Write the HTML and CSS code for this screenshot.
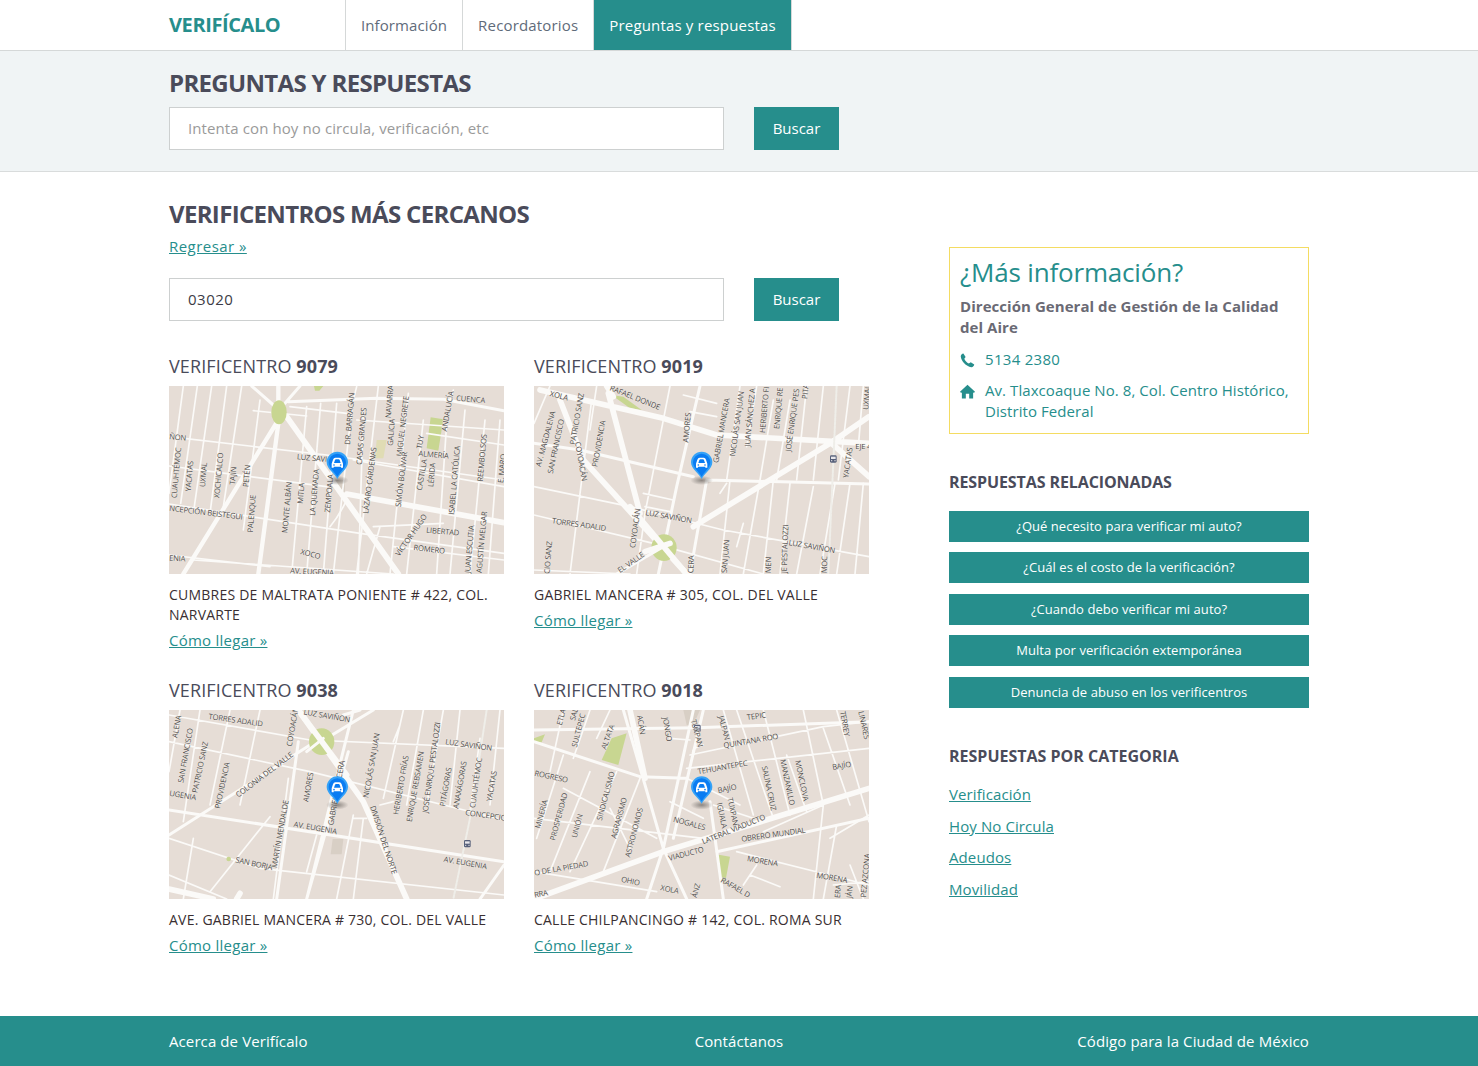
FILE: index.html
```html
<!DOCTYPE html>
<html lang="es">
<head>
    <meta charset="UTF-8">
    <title>Verifícalo</title>
    <link rel="stylesheet" href="styles.css">
</head>
<body>

    <!-- Shared pin and bus stop -->
    <svg class="defs" width="0" height="0">
        <defs>
            <radialGradient id="pinShadow">
                <stop offset="0" stop-color="#6f6a66" stop-opacity=".75"/>
                <stop offset="1" stop-color="#6f6a66" stop-opacity="0"/>
            </radialGradient>
            <g id="pin">
                <ellipse cx="0" cy="4" rx="34" ry="14" fill="url(#pinShadow)"/>
                <path d="M0 0C-6 -14 -32 -30 -32 -50A32 32 0 1 1 32 -50C32 -30 6 -14 0 0Z" fill="#35a2f7"/>
                <path d="M0 -7C-6 -18 -26 -34 -26 -50A26 26 0 1 1 26 -50C26 -34 6 -18 0 -7Z" fill="#0a7cf2"/>
                <path d="M-17 -46L-13 -58Q-11 -64 -6 -64H6Q11 -64 13 -58L17 -46V-34H11V-37H-11V-34H-17ZM-10 -48H10L7 -57Q6 -59 4 -59H-4Q-6 -59 -7 -57Z" fill="#fff" fill-rule="evenodd"/>
                <circle cx="-10" cy="-42" r="2.500" fill="#0a7cf2"/>
                <circle cx="10" cy="-42" r="2.500" fill="#0a7cf2"/>
            </g>
            <g id="bus">
                <rect x="-10" y="-11" width="20" height="22" rx="4" fill="#57607a"/>
                <rect x="-7" y="-7" width="14" height="7" fill="#e8e6ea"/>
                <circle cx="-5" cy="5" r="2" fill="#e8e6ea"/>
                <circle cx="5" cy="5" r="2" fill="#e8e6ea"/>
            </g>
        </defs>
    </svg>

    <!-- Nav -->
    <header class="topbar">
        <div class="wrap topbar-in">
            <a class="brand">VERIFÍCALO</a>
            <nav class="tabs">
                <a class="tab">Información</a>
                <a class="tab">Recordatorios</a>
                <a class="tab active">Preguntas y respuestas</a>
            </nav>
        </div>
    </header>

    <!-- Search band -->
    <section class="band">
        <div class="wrap">
            <h1 class="page-title">PREGUNTAS Y RESPUESTAS</h1>
            <form class="search">
                <input class="search-input" type="text" placeholder="Intenta con hoy no circula, verificación, etc">
                <button class="btn" type="button">Buscar</button>
            </form>
        </div>
    </section>

    <main class="wrap content">
        <section class="results">
            <h2 class="section-title">VERIFICENTROS MÁS CERCANOS</h2>
            <a class="link back">Regresar »</a>
            <form class="search search-zip">
                <input class="search-input" type="text" value="03020">
                <button class="btn" type="button">Buscar</button>
            </form>

            <div class="cards">
                <article class="card">
                    <h3 class="card-title">VERIFICENTRO <b>9079</b></h3>
                    <svg class="map" viewBox="27 18 1005 564" preserveAspectRatio="none">
                        <rect class="ground" x="27" y="18" width="1005" height="564"/>
                        <polygon class="park" points="812,112 850,118 835,212 800,205"/>
                        <polygon class="park-light" points="650,180 680,180 670,235 645,235"/>
                        <polygon class="park" points="462,18 490,18 478,32 465,32"/>
                        <polygon class="block" points="525,300 555,300 555,345 525,330"/>
                        <path class="minor" d="M70 18L27 340M112 18L62 370M155 18L100 400M200 18L150 400M245 18L190 380M300 60L250 450M440 80L395 582M482 70L440 582M530 70L490 582M575 90L520 582M610 90L595 582M655 18L590 582M745 40L690 582M790 120L740 582M860 130L830 582M915 90L870 582M975 120L930 582M1020 120L985 582"/>
                        <path class="minor" d="M27 170L500 225L1032 300M27 258L500 320M27 372L600 460L1032 520M280 92L440 108M390 80L560 100M590 120L1032 150M800 160L1032 195M580 240L1032 320M100 540L700 582M640 440L850 430M700 500L1032 540M510 440Q535 410 555 370M27 525L330 560M880 30L870 60M590 20L580 60M660 440L620 582"/>
                        <path class="major" d="M355 120L70 582M355 18V90M355 130L295 582"/>
                        <path class="major-wide" d="M380 110L715 582M560 342L1032 428"/>
                        <path class="mid" d="M275 18L340 75M420 18L375 70M385 65L650 55L850 58L1032 92"/>
                        <ellipse class="park" cx="357" cy="97" rx="23" ry="36"/>
                        <g class="labels">
                            <text x="888" y="62" transform="rotate(5 888 62)">CUENCA</text>
                            <text x="860" y="155" transform="rotate(-80 860 155)">ANDALUCÍA</text>
                            <text x="692" y="115" transform="rotate(-85 692 115)">NAVARRA</text>
                            <text x="570" y="195" transform="rotate(-85 570 195)">DR. BARRAGÁN</text>
                            <text x="605" y="255" transform="rotate(-85 605 255)">CASAS GRANDES</text>
                            <text x="698" y="198" transform="rotate(-85 698 198)">GALICIA</text>
                            <text x="725" y="230" transform="rotate(-83 725 230)">MIGUEL NEGRETE</text>
                            <text x="785" y="208" transform="rotate(-80 785 208)">TUY</text>
                            <text x="775" y="228" transform="rotate(5 775 228)">ALMERÍA</text>
                            <text x="625" y="402" transform="rotate(-83 625 402)">LÁZARO CÁRDENAS</text>
                            <text x="722" y="382" transform="rotate(-83 722 382)">SIMÓN BOLÍVAR</text>
                            <text x="785" y="332" transform="rotate(-80 785 332)">CASTILLA</text>
                            <text x="820" y="322" transform="rotate(-85 820 322)">LÉRIDA</text>
                            <text x="882" y="405" transform="rotate(-85 882 405)">ISABEL LA CATÓLICA</text>
                            <text x="968" y="305" transform="rotate(-85 968 305)">REEMBOLSOS</text>
                            <text x="1030" y="310" transform="rotate(-85 1030 310)">E. MARQ</text>
                            <text x="410" y="238" transform="rotate(5 410 238)">LUZ SAVI</text>
                            <text x="27" y="178" transform="rotate(5 27 178)">ÑON</text>
                            <text x="50" y="355" transform="rotate(-85 50 355)">CUAUHTÉMOC</text>
                            <text x="92" y="335" transform="rotate(-85 92 335)">YACATAS</text>
                            <text x="135" y="322" transform="rotate(-85 135 322)">UXMAL</text>
                            <text x="178" y="355" transform="rotate(-85 178 355)">XOCHICALCO</text>
                            <text x="225" y="315" transform="rotate(-85 225 315)">TAJÍN</text>
                            <text x="265" y="322" transform="rotate(-85 265 322)">PETÉN</text>
                            <text x="278" y="458" transform="rotate(-85 278 458)">PALENQUE</text>
                            <text x="382" y="460" transform="rotate(-85 382 460)">MONTE ALBÁN</text>
                            <text x="428" y="372" transform="rotate(-85 428 372)">MITLA</text>
                            <text x="465" y="408" transform="rotate(-85 465 408)">LA QUEMADA</text>
                            <text x="510" y="398" transform="rotate(-85 510 398)">ZEMPOALA</text>
                            <text x="27" y="392" transform="rotate(7 27 392)">NCEPCIÓN BEISTEGUI</text>
                            <text x="420" y="522" transform="rotate(15 420 522)">XOCO</text>
                            <text x="718" y="530" transform="rotate(-55 718 530)">VÍCTOR HUGO</text>
                            <text x="798" y="458" transform="rotate(5 798 458)">LIBERTAD</text>
                            <text x="760" y="510" transform="rotate(7 760 510)">ROMERO</text>
                            <text x="930" y="580" transform="rotate(-85 930 580)">JUAN ESCUTIA</text>
                            <text x="965" y="580" transform="rotate(-85 965 580)">AGUSTÍN MELGAR</text>
                            <text x="390" y="580" transform="rotate(3 390 580)">AV. EUGENIA</text>
                            <text x="27" y="542" transform="rotate(3 27 542)">ENIA</text>
                        </g>
                        <use href="#pin" x="532" y="297"/>
                    </svg>
                    <p class="address">CUMBRES DE MALTRATA PONIENTE # 422, COL. NARVARTE</p>
                    <a class="link">Cómo llegar »</a>
                </article>

                <article class="card">
                    <h3 class="card-title">VERIFICENTRO <b>9019</b></h3>
                    <svg class="map" viewBox="12 18 1005 564" preserveAspectRatio="none">
                        <rect class="ground" x="12" y="18" width="1005" height="564"/>
                        <polygon class="park" points="245,45 280,50 335,90 300,85"/>
                        <path class="minor" d="M200 18L180 150M60 18L12 130M185 60L120 582M420 18L345 400L320 582M630 18L590 300M680 18L650 200M730 60L690 300M780 60L740 300M830 18L800 300M880 18L850 300M960 18L925 300M1000 18L985 200M12 320L300 380L580 450L1017 530M12 405L370 490L700 582M340 340L430 360M345 380L420 395M460 45L560 70M480 95L560 110M590 310L570 340M640 430L620 500M12 570L300 582M600 300L570 582M690 300L640 582M730 300L700 582M780 310L750 582M850 320L800 582M915 310L870 582M960 310L920 582M1000 310L975 582"/>
                        <path class="mid" d="M12 190L150 210L490 290M530 300L1017 312M510 18L440 320L385 582M530 300L480 582"/>
                        <path class="major-wide" d="M230 18L250 50M30 30L400 115L560 165L1017 190M90 60L160 240L470 582M235 40L330 400M490 440L900 190L1017 110M905 190L1017 290"/>
                        <path class="rail" d="M920 18L895 582"/>
                        <ellipse class="park" cx="402" cy="503" rx="38" ry="40"/>
                        <path class="major-wide" d="M300 380L470 582M345 515L420 490"/>
                        <path class="mid" d="M260 582L400 500"/>
                        <use href="#bus" x="910" y="237"/>
                        <g class="labels">
                            <text x="58" y="48" transform="rotate(15 58 48)">XOLA</text>
                            <text x="238" y="30" transform="rotate(22 238 30)">RAFAEL DONDE</text>
                            <text x="135" y="195" transform="rotate(-80 135 195)">PATRICIO SANZ</text>
                            <text x="32" y="262" transform="rotate(-75 32 262)">AV. MAGDALENA</text>
                            <text x="68" y="282" transform="rotate(-78 68 282)">SAN FRANCISCO</text>
                            <text x="202" y="262" transform="rotate(-80 202 262)">PROVIDENCIA</text>
                            <text x="290" y="258" transform="rotate(80 255 130)">COYOACÁN</text>
                            <text x="475" y="188" transform="rotate(-85 475 188)">AMORES</text>
                            <text x="565" y="250" transform="rotate(-80 565 250)">GABRIEL MANCERA</text>
                            <text x="615" y="230" transform="rotate(-82 615 230)">NICOLÁS SAN JUAN</text>
                            <text x="660" y="200" transform="rotate(-85 660 200)">JUAN SÁNCHEZ A</text>
                            <text x="705" y="160" transform="rotate(-85 705 160)">HERIBERTO FI</text>
                            <text x="748" y="148" transform="rotate(-85 748 148)">ENRIQUE RE</text>
                            <text x="782" y="215" transform="rotate(-82 782 215)">JOSÉ ENRIQUE PES</text>
                            <text x="832" y="58" transform="rotate(-85 832 58)">PITA</text>
                            <text x="1015" y="90" transform="rotate(-85 1015 90)">UXMAL</text>
                            <text x="976" y="208">EJE 4</text>
                            <text x="955" y="295" transform="rotate(-82 955 295)">YACATAS</text>
                            <text x="345" y="405" transform="rotate(10 345 405)">LUZ SAVIÑON</text>
                            <text x="775" y="495" transform="rotate(10 775 495)">LUZ SAVIÑON</text>
                            <text x="65" y="430" transform="rotate(8 65 430)">TORRES ADALID</text>
                            <text x="315" y="505" transform="rotate(-82 315 505)">COYOACÁN</text>
                            <text x="20" y="580" transform="rotate(-85 40 560)">CIO SANZ</text>
                            <text x="590" y="580" transform="rotate(-85 590 580)">SAN JUAN</text>
                            <text x="270" y="580" transform="rotate(-35 270 580)">EL VALLE</text>
                            <text x="490" y="580" transform="rotate(-88 490 580)">CERA</text>
                            <text x="770" y="580" transform="rotate(-88 770 580)">JE PESTALOZZI</text>
                            <text x="722" y="580" transform="rotate(-88 722 580)">MEN</text>
                            <text x="890" y="580" transform="rotate(-88 890 580)">MOC</text>
                        </g>
                        <use href="#pin" x="515" y="297"/>
                    </svg>
                    <p class="address">GABRIEL MANCERA # 305, COL. DEL VALLE</p>
                    <a class="link">Cómo llegar »</a>
                </article>

                <article class="card">
                    <h3 class="card-title">VERIFICENTRO <b>9038</b></h3>
                    <svg class="map" viewBox="27 15 1005 567" preserveAspectRatio="none">
                        <rect class="ground" x="27" y="15" width="1005" height="567"/>
                        <polygon class="block" points="518,402 550,402 545,448 512,448"/>
                        <path class="minor" d="M27 30L450 105L1032 130M27 110L450 200L1032 345M60 15L27 200M120 15L70 350M210 15L150 300M300 15L240 300M385 220L340 582M730 15L670 280M720 60L700 110M790 15L740 300M850 15L800 300M900 15L870 300M960 100L930 320M1020 15L990 300M580 330L530 582M610 340L580 582M27 400L300 490L1032 570M150 560L330 335M660 300L700 290M580 340L620 340M440 500L470 390M100 400L70 582M27 510L200 582"/>
                        <path class="mid" d="M550 30L600 15M415 110L350 582M565 140L440 582M580 15L440 582M27 315L1032 470M27 390L450 120M500 100L640 15"/>
                        <path class="major-wide" d="M415 15L610 290L740 582M27 552L160 582M230 582L240 565"/>
                        <path class="rail" d="M980 15L930 340L880 582"/>
                        <ellipse class="park" cx="485" cy="110" rx="38" ry="40"/>
                        <path class="major-wide" d="M415 15L560 210"/>
                        <path class="mid" d="M440 140L490 100"/>
                        <circle class="park" cx="206" cy="462" r="7"/>
                        <path class="mid" d="M1032 480L960 582"/>
                        <use href="#bus" x="922" y="416"/>
                        <g class="labels">
                            <text x="145" y="42" transform="rotate(8 145 42)">TORRES ADALID</text>
                            <text x="430" y="28" transform="rotate(10 430 28)">LUZ SAVIÑON</text>
                            <text x="395" y="125" transform="rotate(-80 395 125)">COYOACÁN</text>
                            <text x="52" y="100" transform="rotate(-80 52 100)">ALENA</text>
                            <text x="70" y="235" transform="rotate(-80 70 235)">SAN FRANCISCO</text>
                            <text x="112" y="265" transform="rotate(-78 112 265)">PATRICIO SANZ</text>
                            <text x="180" y="312" transform="rotate(-78 180 312)">PROVIDENCIA</text>
                            <text x="235" y="278" transform="rotate(-37 235 278)">COLONIA DEL VALLE</text>
                            <text x="445" y="292" transform="rotate(-80 445 292)">AMORES</text>
                            <text x="27" y="272" transform="rotate(10 27 272)">UGENIA</text>
                            <text x="400" y="365" transform="rotate(10 400 365)">AV. EUGENIA</text>
                            <text x="850" y="470" transform="rotate(10 850 470)">AV. EUGENIA</text>
                            <text x="225" y="472" transform="rotate(12 225 472)">SAN BORJA</text>
                            <text x="350" y="490" transform="rotate(-80 350 490)">MARTÍN MENDALDE</text>
                            <text x="520" y="362" transform="rotate(-80 520 362)">GABRIEL MANCERA</text>
                            <text x="625" y="280" transform="rotate(-80 625 280)">NICOLÁS SAN JUAN</text>
                            <text x="715" y="330" transform="rotate(-80 715 330)">HERIBERTO FRÍAS</text>
                            <text x="755" y="352" transform="rotate(-80 755 352)">ENRIQUE REBSAMEN</text>
                            <text x="803" y="325" transform="rotate(-82 803 325)">JOSÉ ENRIQUE PESTALOZZI</text>
                            <text x="855" y="305" transform="rotate(-80 855 305)">PITÁGORAS</text>
                            <text x="895" y="312" transform="rotate(-80 895 312)">ANAXÁGORAS</text>
                            <text x="945" y="310" transform="rotate(-82 945 310)">CUAUHTÉMOC</text>
                            <text x="995" y="290" transform="rotate(-80 995 290)">YACATAS</text>
                            <text x="915" y="330" transform="rotate(8 915 330)">CONCEPCIÓ</text>
                            <text x="855" y="118" transform="rotate(8 855 118)">LUZ SAVIÑON</text>
                            <text x="630" y="305" transform="rotate(72 630 305)">DIVISIÓN DEL NORTE</text>
                        </g>
                        <use href="#pin" x="532" y="296"/>
                    </svg>
                    <p class="address">AVE. GABRIEL MANCERA # 730, COL. DEL VALLE</p>
                    <a class="link">Cómo llegar »</a>
                </article>

                <article class="card">
                    <h3 class="card-title">VERIFICENTRO <b>9018</b></h3>
                    <svg class="map" viewBox="12 15 1005 567" preserveAspectRatio="none">
                        <rect class="ground" x="12" y="15" width="1005" height="567"/>
                        <polygon class="park" points="12,100 45,88 35,112 12,110"/>
                        <polygon class="park" points="245,100 290,85 265,180 215,165"/>
                        <polygon class="park" points="558,448 600,455 585,535 572,520"/>
                        <polygon class="block" points="460,15 510,15 490,60 470,60"/>
                        <path class="minor" d="M100 15L60 200M180 15L130 160M240 15L200 100M100 150L20 400M180 200L60 500M260 200L120 500M330 220L220 500M470 220L630 300M480 150L880 65L1017 50M470 190L1017 130M420 100L480 105M490 150Q480 130 520 120M820 15L880 300L850 582M880 70L960 300M920 15L1017 350M580 15L670 330M620 15L730 340M700 15L780 330M770 150L830 320M12 340L520 400M100 250L380 400M420 290L520 340M550 300L670 340M12 500L380 560M620 440L1017 540M700 380L880 300M900 400L1017 330M960 480L1000 582M920 360L880 582M680 480L640 540M910 540L1017 530M660 510L750 545M240 310L300 430"/>
                        <path class="mid" d="M12 75L500 68L1017 50M12 110L330 215L470 220M490 15L400 430L350 582M520 15L430 400M280 15L400 430L470 582M540 290L580 582M560 440L1017 340"/>
                        <path class="major-wide" d="M12 582L400 440L1017 250M300 15L345 220"/>
                        <use href="#bus" x="502" y="70"/>
                        <g class="labels">
                            <text x="95" y="62" transform="rotate(-75 95 62)">ETLA</text>
                            <text x="135" y="48" transform="rotate(-75 135 48)">SAL</text>
                            <text x="140" y="128" transform="rotate(-75 140 128)">SULTEPEC</text>
                            <text x="228" y="135" transform="rotate(-70 228 135)">ALTATA</text>
                            <text x="360" y="65" transform="rotate(80 360 25)">ACÁN</text>
                            <text x="445" y="78" transform="rotate(80 445 30)">JONGO</text>
                            <text x="540" y="90" transform="rotate(75 540 30)">TUXPAN</text>
                            <text x="618" y="75" transform="rotate(75 618 20)">JALPAN</text>
                            <text x="652" y="45" transform="rotate(-8 652 45)">TEPIC</text>
                            <text x="582" y="130" transform="rotate(-10 582 130)">QUINTANA ROO</text>
                            <text x="505" y="208" transform="rotate(-10 505 208)">TEHUANTEPEC</text>
                            <text x="908" y="195" transform="rotate(-10 908 195)">BAJÍO</text>
                            <text x="565" y="265" transform="rotate(-12 565 265)">BAJÍO</text>
                            <text x="930" y="20" transform="rotate(80 930 20)">TERREY</text>
                            <text x="985" y="20" transform="rotate(78 985 20)">LINARES</text>
                            <text x="695" y="185" transform="rotate(78 695 185)">SALINA CRUZ</text>
                            <text x="750" y="165" transform="rotate(78 750 165)">MANZANILLO</text>
                            <text x="795" y="168" transform="rotate(78 795 168)">MONCLOVA</text>
                            <text x="12" y="212" transform="rotate(12 12 212)">ROGRESO</text>
                            <text x="30" y="372" transform="rotate(-75 30 372)">MINERÍA</text>
                            <text x="75" y="408" transform="rotate(-75 75 408)">PROSPERIDAD</text>
                            <text x="140" y="400" transform="rotate(-75 140 400)">UNIÓN</text>
                            <text x="215" y="348" transform="rotate(-75 215 348)">SINDICALISMO</text>
                            <text x="258" y="402" transform="rotate(-75 258 402)">AGRARISMO</text>
                            <text x="300" y="458" transform="rotate(-75 300 458)">ASTRONOMOS</text>
                            <text x="428" y="350" transform="rotate(15 428 350)">NOGALES</text>
                            <text x="560" y="295" transform="rotate(78 560 295)">IGUALA</text>
                            <text x="592" y="280" transform="rotate(78 592 280)">TUXPAN</text>
                            <text x="520" y="418" transform="rotate(-22 520 418)">LATERAL VIADUCTO</text>
                            <text x="635" y="410" transform="rotate(-8 635 410)">OBRERO MUNDIAL</text>
                            <text x="418" y="468" transform="rotate(-15 418 468)">VIADUCTO</text>
                            <text x="650" y="468" transform="rotate(10 650 468)">MORENA</text>
                            <text x="858" y="518" transform="rotate(10 858 518)">MORENA</text>
                            <text x="14" y="512" transform="rotate(-10 14 512)">O DE LA PIEDAD</text>
                            <text x="14" y="578" transform="rotate(-10 14 578)">RRA</text>
                            <text x="272" y="530" transform="rotate(12 272 530)">OHIO</text>
                            <text x="390" y="555" transform="rotate(12 390 555)">XOLA</text>
                            <text x="500" y="580" transform="rotate(-75 500 580)">ÁNZ</text>
                            <text x="570" y="530" transform="rotate(30 570 530)">RAFAEL D</text>
                            <text x="930" y="580" transform="rotate(-85 930 580)">ERA</text>
                            <text x="965" y="580" transform="rotate(-85 965 580)">JÁN</text>
                            <text x="1008" y="578" transform="rotate(-85 1008 578)">PEZ AZCONA</text>
                        </g>
                        <use href="#pin" x="515" y="296"/>
                    </svg>
                    <p class="address">CALLE CHILPANCINGO # 142, COL. ROMA SUR</p>
                    <a class="link">Cómo llegar »</a>
                </article>
            </div>
        </section>

        <aside class="sidebar">
            <div class="info-box">
                <h2 class="info-title">¿Más información?</h2>
                <p class="info-org">Dirección General de Gestión de la Calidad del Aire</p>
                <p class="info-row info-phone">
                    <svg class="info-icon" viewBox="0 0 16 16"><path d="M3.600 .6L6 4.200 4.600 6.100C5.300 8 7.400 10.300 9.400 11.200L11.500 9.900 15.200 12.300C15 13.800 13.600 15.300 12 15.100 6.500 14.300 1.300 8.700 .8 3.700 .7 2.300 2.100 .8 3.600 .6Z"/></svg>
                    <span>5134 2380</span>
                </p>
                <p class="info-row">
                    <svg class="info-icon" viewBox="0 0 16 16"><path d="M8 .8L16 8.300 14.800 9.500 14 8.800V15.500H9.800V10.500H6.200V15.500H2V8.800L1.200 9.500 0 8.300Z"/></svg>
                    <span>Av. Tlaxcoaque No. 8, Col. Centro Histórico, Distrito Federal</span>
                </p>
            </div>

            <h3 class="side-title">RESPUESTAS RELACIONADAS</h3>
            <div class="side-buttons">
                <a class="side-btn">¿Qué necesito para verificar mi auto?</a>
                <a class="side-btn">¿Cuál es el costo de la verificación?</a>
                <a class="side-btn">¿Cuando debo verificar mi auto?</a>
                <a class="side-btn">Multa por verificación extemporánea</a>
                <a class="side-btn">Denuncia de abuso en los verificentros</a>
            </div>

            <h3 class="side-title side-title-cat">RESPUESTAS POR CATEGORIA</h3>
            <ul class="side-links">
                <li><a class="link">Verificación</a></li>
                <li><a class="link">Hoy No Circula</a></li>
                <li><a class="link">Adeudos</a></li>
                <li><a class="link">Movilidad</a></li>
            </ul>
        </aside>
    </main>

    <!-- Footer -->
    <footer class="footer">
        <div class="wrap footer-in">
            <a>Acerca de Verifícalo</a>
            <a>Contáctanos</a>
            <a class="footer-right">Código para la Ciudad de México</a>
        </div>
    </footer>

</body>
</html>
```

FILE: styles.css
```css
/* General */
* {
    box-sizing: border-box;
}

body {
    margin: 0;
    font-family: "Open Sans", sans-serif;
    font-size: 15px;
    line-height: 21px;
    letter-spacing: .1px;
    color: #4a4b5a;
    background: #fff;
}

.defs {
    position: absolute;
}

.wrap {
    width: 1140px;
    margin: 0 auto;
}

.link {
    color: #268e8c;
    text-decoration: underline;
}

/* Nav */
.topbar {
    height: 51px;
    border-bottom: 1px solid #d5d8d8;
}

.topbar-in {
    display: flex;
}

.brand {
    width: 176px;
    font-size: 20px;
    font-weight: 700;
    line-height: 50px;
    letter-spacing: -.4px;
    color: #268e8c;
}

.tabs {
    display: flex;
    border-left: 1px solid #d5d8d8;
}

.tab {
    height: 50px;
    padding: 0 15px;
    line-height: 51px;
    letter-spacing: .17px;
    color: #5f6b7a;
    border-right: 1px solid #d5d8d8;
}

.tab:first-child {
    letter-spacing: .1px;
}

.tab.active {
    color: #fff;
    background: #268e8c;
}

/* Search band */
.band {
    height: 121px;
    padding-top: 17px;
    background: #f0f4f5;
    border-bottom: 1px solid #d9dcdc;
}

.page-title,
.section-title {
    margin: 0;
    font-size: 24px;
    font-weight: 700;
    line-height: 30px;
    letter-spacing: -.67px;
    color: #4a4b5a;
}

.search {
    display: flex;
    gap: 30px;
    margin-top: 9px;
}

.search-input {
    width: 555px;
    height: 43px;
    padding: 0 18px 2px;
    font-family: inherit;
    font-size: 15px;
    letter-spacing: .1px;
    color: #3c3c46;
    background: #fff;
    border: 1px solid #cdd0d0;
}

.search-input::placeholder {
    color: #9a9a9a;
}

.btn {
    width: 85px;
    height: 43px;
    padding: 0 0 2px;
    font-family: inherit;
    font-size: 15px;
    color: #fff;
    background: #268e8c;
    border: none;
}

/* Main */
.content {
    display: grid;
    grid-template-columns: 700px 360px;
    column-gap: 80px;
    height: 844px;
    padding-top: 28px;
}

.section-title {
    margin-top: -1px;
}

.back {
    display: block;
    margin-top: 7px;
    letter-spacing: .45px;
}

.search-zip {
    margin-top: 21px;
}

.search-zip .search-input {
    letter-spacing: .5px;
}

.cards {
    display: grid;
    grid-template-columns: 335px 335px;
    column-gap: 30px;
    margin-top: 32px;
}

.card {
    height: 324px;
}

.card:nth-child(n+3) {
    height: 300px;
}

.card .link {
    letter-spacing: .25px;
}

.card-title {
    margin: 0 0 7px;
    font-size: 18px;
    font-weight: 400;
    line-height: 26px;
    letter-spacing: .12px;
    color: #4a4b5a;
}

.card-title b {
    font-weight: 700;
}

.map {
    display: block;
    width: 335px;
    height: 188px;
}

.card:nth-child(n+3) .map {
    height: 189px;
}

.address {
    margin: 11px 0 5px;
    font-size: 14px;
    line-height: 20px;
    letter-spacing: .22px;
    color: #3a2f32;
}

/* Map drawing */
.ground {
    fill: #e6ddd6;
}

.park {
    fill: #c8d691;
}

.park-light {
    fill: #e0dcb4;
}

.block {
    fill: #d8cfc5;
}

.minor,
.mid,
.major,
.major-wide,
.rail {
    fill: none;
    stroke: #fbfaf8;
    stroke-linecap: round;
    stroke-linejoin: round;
}

.minor {
    stroke-width: 5;
}

.mid {
    stroke-width: 9;
}

.major {
    stroke-width: 13;
}

.major-wide {
    stroke-width: 17;
}

.rail {
    stroke-width: 6;
    stroke-dasharray: 8 4;
    stroke: #efeee9;
}

.labels {
    font-size: 23px;
    letter-spacing: -.6px;
    fill: #4f4d4b;
    stroke: #f1ece7;
    stroke-width: 2;
    paint-order: stroke;
}

/* Sidebar */
.info-box {
    height: 187px;
    margin-top: 47px;
    padding: 7px 10px;
    border: 1px solid #f4dc62;
}

.info-title {
    margin: 0;
    font-size: 26px;
    font-weight: 400;
    line-height: 34px;
    letter-spacing: -.18px;
    color: #268e8c;
}

.info-org {
    margin: 7px 0 0;
    font-weight: 700;
    letter-spacing: .05px;
    color: #6a6a74;
}

.info-row {
    display: flex;
    gap: 10px;
    margin: 10px 0 0;
    letter-spacing: .07px;
    color: #268e8c;
}

.info-phone {
    margin-top: 11px;
    letter-spacing: .3px;
}

.info-icon {
    flex: none;
    width: 15px;
    height: 15px;
    margin-top: 4px;
    fill: #268e8c;
}

.side-title {
    margin: 37px 0 0;
    font-size: 16px;
    font-weight: 700;
    line-height: 22px;
    letter-spacing: -.1px;
    color: #4a4b5a;
}

.side-buttons {
    display: flex;
    flex-direction: column;
    gap: 10.4px;
    margin-top: 18px;
}

.side-btn {
    height: 31px;
    font-size: 13px;
    line-height: 31px;
    letter-spacing: .05px;
    text-align: center;
    color: #fff;
    background: #268e8c;
}

.side-title-cat {
    margin-top: 37px;
    letter-spacing: 0;
}

.side-links {
    display: flex;
    flex-direction: column;
    gap: 10.5px;
    margin: 17.9px 0 0;
    padding: 0;
    list-style: none;
}

/* Footer */
.footer {
    height: 50px;
    background: #268e8c;
}

.footer-in {
    display: grid;
    grid-template-columns: 1fr auto 1fr;
    line-height: 50px;
    color: #fff;
}

.footer-right {
    text-align: right;
}
```
